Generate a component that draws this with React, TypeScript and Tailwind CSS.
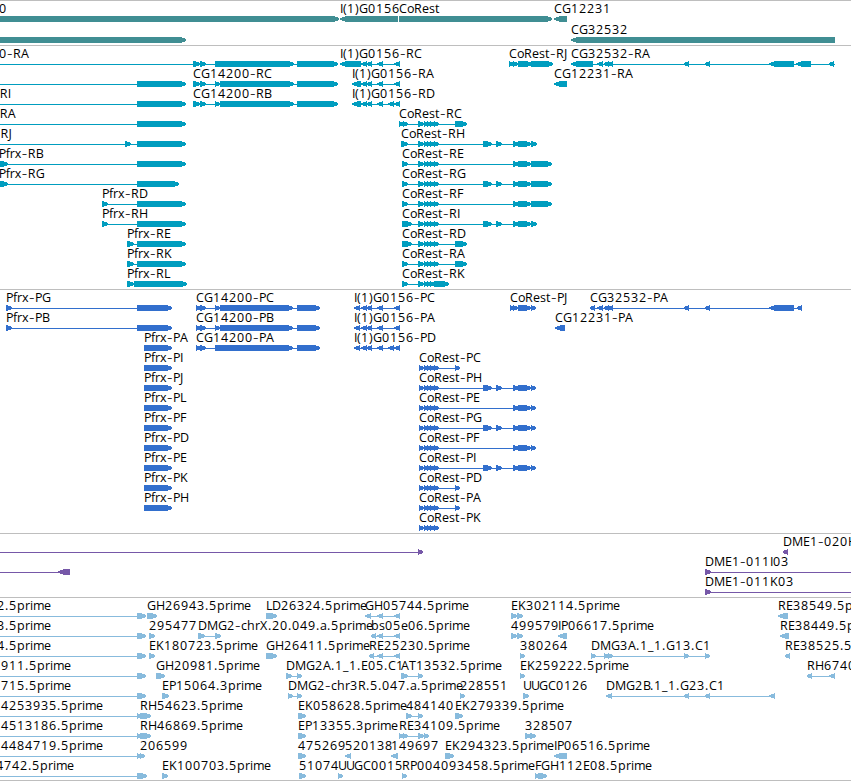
type Exon = [number, number];

interface Feature {
  label?: string;
  // label offset when the feature itself begins left of the view
  labelX?: number;
  exons: Exon[];
  left?: boolean;
  from?: number;
  to?: number;
}

interface Track {
  id: string;
  color: string;
  rowClass: string;
  className: string;
  rows: Feature[][];
}

// Advance widths of the label face in px, digits are all 8
const ADVANCE: Record<string, number> = {
  A: 8, B: 7, C: 8, D: 9, E: 7, F: 6, G: 9, H: 9, I: 3, J: 4, K: 8, L: 6, M: 11,
  P: 7, R: 8, T: 7, U: 8, X: 8, a: 7, b: 8, c: 6, e: 7, f: 4, h: 8, i: 3, m: 11,
  o: 7, p: 8, r: 5, s: 6, t: 5, x: 7, '.': 4, '-': 6, _: 6, '(': 4, ')': 4,
};

const feat = (label: string, exons: Exon[], extra: Partial<Feature> = {}): Feature => ({ label, exons, ...extra });
const rev = (label: string, exons: Exon[], extra: Partial<Feature> = {}): Feature => ({ label, exons, left: true, ...extra });

// Exon groups shared by several isoforms
const core: Exon[] = [[418, 424], [424, 428], [427, 432], [430, 435], [434, 439]];
const mid: Exon[] = [[483, 492], [496, 502]];
const tail: Exon[] = [[513, 519], [518, 531]];
const cds: Exon[] = [[419, 424], [424, 428], [427, 432], [430, 435], [434, 439]];
const g0156: Exon[] = [[361, 367], [366, 372], [377, 383], [394, 400]];
const estG0156: Exon[] = [[377, 383], [394, 400]];
const cg14200: Exon[] = [[193, 200], [200, 206], [215, 220], [220, 294], [297, 338]];
const cg14200p: Exon[] = [[196, 201], [200, 206], [215, 220], [220, 293], [297, 320]];

const offLeft = (label: string, labelX: number, exons: Exon[]): Feature => ({ label, labelX, exons, from: 0 });

const tracks: Track[] = [
  {
    id: 'genes',
    color: '#408e93',
    rowClass: 'h-[21px]',
    className: 'pb-0.5',
    rows: [
      [
        offLeft('0', -1, [[-10, 339]]),
        rev('I(1)G0156', [[340, 398]]),
        feat('CoRest', [[399, 552]]),
        rev('CG12231', [[554, 567]]),
      ],
      [{ exons: [[-10, 186]] }, rev('CG32532', [[571, 835]])],
    ],
  },
  {
    id: 'transcripts',
    color: '#009dbf',
    rowClass: 'h-5',
    className: 'pb-[3px]',
    rows: [
      [
        offLeft('0-RA', -1, [[193, 200], [200, 206], [215, 294], [297, 338]]),
        rev('I(1)G0156-RC', [[340, 361], ...g0156]),
        feat('CoRest-RJ', [[509, 514], [513, 518], [518, 532], [531, 553]]),
        rev('CG32532-RA', [[571, 593], [597, 603], [604, 609], [608, 613], [684, 689], [705, 710], [769, 794], [796, 811], [829, 834]], { to: 835 }),
      ],
      [
        { exons: [[137, 186]], from: 0 },
        feat('CG14200-RC', cg14200),
        rev('I(1)G0156-RA', [[352, 361], ...g0156]),
        rev('CG12231-RA', [[554, 567]]),
      ],
      [
        offLeft('RI', -0.3, [[137, 186]]),
        feat('CG14200-RB', cg14200),
        rev('I(1)G0156-RD', [[352, 361], ...g0156, [388, 394]]),
      ],
      [
        offLeft('RA', -0.3, [[137, 186]]),
        feat('CoRest-RC', [[399, 404], [403, 408], ...core, [455, 467]]),
      ],
      [
        offLeft('RJ', 0.5, [[125, 131], [137, 186]]),
        feat('CoRest-RH', [[401, 408], ...core, ...mid, ...tail, [531, 537]]),
      ],
      [
        offLeft('Pfrx-RB', -1.2, [[-5, 8], [137, 186]]),
        feat('CoRest-RE', [[402, 408], ...core, ...tail, [531, 552]]),
      ],
      [
        offLeft('Pfrx-RG', -1.2, [[-5, 8], [137, 179]]),
        feat('CoRest-RG', [[402, 408], ...core, ...mid, ...tail, [531, 552]]),
      ],
      [
        feat('Pfrx-RD', [[102, 108], [137, 186]]),
        feat('CoRest-RF', [[402, 408], ...core, ...tail, [531, 552]]),
      ],
      [
        feat('Pfrx-RH', [[102, 108], [137, 186]]),
        feat('CoRest-RI', [[402, 412], ...core, ...mid, ...tail, [531, 537]]),
      ],
      [feat('Pfrx-RE', [[127, 134], [137, 186]]), feat('CoRest-RD', [[402, 412], ...core, [455, 467]])],
      [feat('Pfrx-RK', [[127, 134], [137, 186]]), feat('CoRest-RA', [[402, 408], ...core, [455, 467]])],
      [feat('Pfrx-RL', [[127, 134], [134, 187]]), feat('CoRest-RK', [[402, 408], ...core, [434, 449]])],
    ],
  },
  {
    id: 'proteins',
    color: '#326fcd',
    rowClass: 'h-5',
    className: 'pb-[3px]',
    rows: [
      [
        feat('Pfrx-PG', [[6, 12], [137, 172]]),
        feat('CG14200-PC', cg14200p),
        rev('I(1)G0156-PC', [[354, 360], ...g0156]),
        feat('CoRest-PJ', [[510, 514], [513, 518], [518, 531], [531, 536]]),
        rev('CG32532-PA', [[590, 595], [597, 603], [604, 609], [608, 613], [684, 689], [705, 710], [769, 794], [797, 802]]),
      ],
      [
        feat('Pfrx-PB', [[6, 12], [137, 172]]),
        feat('CG14200-PB', cg14200p),
        rev('I(1)G0156-PA', [[354, 360], ...g0156]),
        rev('CG12231-PA', [[555, 565]]),
      ],
      [
        feat('Pfrx-PA', [[144, 172]]),
        feat('CG14200-PA', [[196, 201], [200, 206], [215, 293], [297, 320]]),
        rev('I(1)G0156-PD', [[354, 360], ...g0156, [388, 394]]),
      ],
      [feat('Pfrx-PI', [[144, 172]]), feat('CoRest-PC', [...cds, [455, 460]])],
      [feat('Pfrx-PJ', [[144, 172]]), feat('CoRest-PH', [...cds, ...mid, ...tail, [531, 536]])],
      [feat('Pfrx-PL', [[144, 172]]), feat('CoRest-PE', [...cds, ...tail, [531, 536]])],
      [feat('Pfrx-PF', [[144, 172]]), feat('CoRest-PG', [...cds, ...mid, ...tail, [531, 536]])],
      [feat('Pfrx-PD', [[144, 172]]), feat('CoRest-PF', [...cds, ...tail, [531, 536]])],
      [feat('Pfrx-PE', [[144, 172]]), feat('CoRest-PI', [...cds, ...mid, ...tail, [531, 536]])],
      [feat('Pfrx-PK', [[144, 172]]), feat('CoRest-PD', [...cds, [455, 460]])],
      [feat('Pfrx-PH', [[144, 172]]), feat('CoRest-PA', [...cds, [455, 460]])],
      [feat('CoRest-PK', cds)],
    ],
  },
  {
    id: 'clones',
    color: '#7658a8',
    rowClass: 'h-5',
    className: 'pb-[3px]',
    rows: [
      [{ exons: [[418, 423]], from: 0 }, rev('DME1-020H', [[783, 788]])],
      [{ exons: [[58, 70]], left: true, from: 0 }, feat('DME1-011I03', [[705, 711]], { to: 851 })],
      [feat('DME1-011K03', [[705, 711]], { to: 851 })],
    ],
  },
  {
    id: 'ests',
    color: '#88bbdd',
    rowClass: 'h-5',
    className: 'border-b pb-0.5',
    rows: [
      [
        offLeft('2.5prime', -3, [[137, 146]]),
        feat('GH26943.5prime', [[147, 157]]),
        feat('LD26324.5prime', [[266, 277]]),
        rev('GH05744.5prime', [[365, 371], ...estG0156]),
        feat('EK302114.5prime', [[511, 517], [517, 523]]),
        rev('RE38549.5prime', [[778, 788]]),
      ],
      [
        offLeft('3.5prime', -3, [[137, 146]]),
        feat('295477', [[149, 155]]),
        feat('DMG2-chrX.20.049.a.5prime', [[198, 205], [215, 221]]),
        rev('bs05e06.5prime', [[371, 376], ...estG0156]),
        feat('499579', [[511, 517], [517, 523]]),
        rev('IP06617.5prime', [[558, 567]]),
        rev('RE38449.5prime', [[780, 789]]),
      ],
      [
        offLeft('4.5prime', -3, [[137, 146]]),
        feat('EK180723.5prime', [[149, 155]]),
        feat('GH26411.5prime', [[266, 277]]),
        rev('RE25230.5prime', [[369, 374], ...estG0156]),
        feat('380264', [[520, 525]]),
        feat('DMG3A.1_1.G13.C1', [[591, 596], [604, 609], [608, 613], [684, 689], [705, 710]]),
        rev('RE38525.5prime', [[785, 790]]),
      ],
      [
        offLeft('911.5prime', 1, [[137, 146]]),
        feat('GH20981.5prime', [[156, 165]]),
        feat('DMG2A.1_1.E05.C1', [[286, 292], [297, 302]]),
        feat('AT13532.5prime', [[401, 408], [418, 423]]),
        feat('EK259222.5prime', [[520, 525]]),
        rev('RH6740', [[807, 812], [829, 835]]),
      ],
      [
        offLeft('715.5prime', 1, [[137, 146]]),
        feat('EP15064.3prime', [[162, 169]]),
        feat('DMG2-chr3R.5.047.a.5prime', [[288, 293], [297, 302]]),
        feat('228551', [[460, 465]]),
        feat('UUGC0126', [[523, 529]]),
        rev('DMG2B.1_1.G23.C1', [[606, 612], [684, 689], [705, 710], [769, 775]]),
      ],
      [
        offLeft('4253935.5prime', 1, [[137, 141]]),
        feat('RH54623.5prime', [[140, 151]]),
        feat('EK058628.5prime', [[298, 306]]),
        feat('484140', [[406, 412], [418, 423]]),
        feat('EK279339.5prime', [[455, 463]]),
      ],
      [
        offLeft('4513186.5prime', 1, [[137, 141]]),
        feat('RH46869.5prime', [[140, 151]]),
        feat('EP13355.3prime', [[298, 306]]),
        feat('RE34109.5prime', [[399, 404], [403, 408], [418, 424], [424, 429]]),
        feat('328507', [[525, 531], [530, 536]]),
      ],
      [
        offLeft('4484719.5prime', 1, [[137, 142]]),
        feat('206599', [[140, 145]]),
        feat('475269', [[298, 306]]),
        rev('520138', [[345, 351]]),
        rev('149697', [[391, 398]]),
        feat('EK294323.5prime', [[445, 454]]),
        rev('IP06516.5prime', [[554, 567]]),
      ],
      [
        offLeft('4742.5prime', -4, [[137, 147]]),
        feat('EK100703.5prime', [[162, 168]]),
        feat('51074', [[299, 306]]),
        feat('UUGC0015', [[338, 343]]),
        feat('RP004093458.5prime', [[402, 407]]),
        feat('FGH112E08.5prime', [[535, 540], [538, 547]]),
      ],
    ],
  },
];

function glyphPositions(label: string, start: number) {
  let x = start;
  return label
    .split('')
    .map((ch) => {
      const at = x;
      x += ADVANCE[ch] ?? 8;
      return at;
    })
    .join(' ');
}

function Label({ text, x }: { text: string; x: number }) {
  // the dash is set larger than the letters, so it sits on its own baseline
  const baselines = text.split('').map((ch) => (ch === '-' ? 13 : 12));

  return (
    <text x={glyphPositions(text, x)} y={baselines.join(' ')} className="fill-black">
      {text.split(/(-)/).map((part, i) =>
        part === '-' ? (
          <tspan key={i} className="text-[17px] font-light">
            -
          </tspan>
        ) : (
          part
        ),
      )}
    </text>
  );
}

function exonPoints([start, end]: Exon, left?: boolean) {
  const head = Math.min(6, end - start);
  return left
    ? `${end},15 ${start + head},15 ${start},17 ${start},19 ${start + head},21 ${end},21`
    : `${start},15 ${end - head},15 ${end},17 ${end},19 ${end - head},21 ${start},21`;
}

function FeatureGlyph({ feature }: { feature: Feature }) {
  const { label, labelX, exons, left } = feature;
  const start = Math.min(...exons.map((e) => e[0]));
  const end = Math.max(...exons.map((e) => e[1]));
  const from = feature.from ?? start;
  const to = feature.to ?? end;

  return (
    <g>
      {label && <Label text={label} x={labelX ?? start} />}
      <g shapeRendering="crispEdges" fill="currentColor">
        <rect x={from} y={18} width={to - from} height={1} />
        {exons.map((exon, i) => (
          <polygon key={i} points={exonPoints(exon, left)} />
        ))}
      </g>
    </g>
  );
}

function TrackPanel({ track }: { track: Track }) {
  return (
    <section className={`flex flex-col border-t border-[#bebebe] ${track.className}`} style={{ color: track.color }}>
      {track.rows.map((row, i) => (
        <div key={i} className={track.rowClass}>
          <svg className="block h-full w-full overflow-visible">
            {row.map((feature, j) => (
              <FeatureGlyph key={j} feature={feature} />
            ))}
          </svg>
        </div>
      ))}
    </section>
  );
}

export default function App() {
  return (
    <main className="h-[781px] w-[851px] overflow-hidden bg-white font-['Open_Sans',sans-serif] text-[12.5px]">
      {tracks.map((track) => (
        <TrackPanel key={track.id} track={track} />
      ))}
    </main>
  );
}
